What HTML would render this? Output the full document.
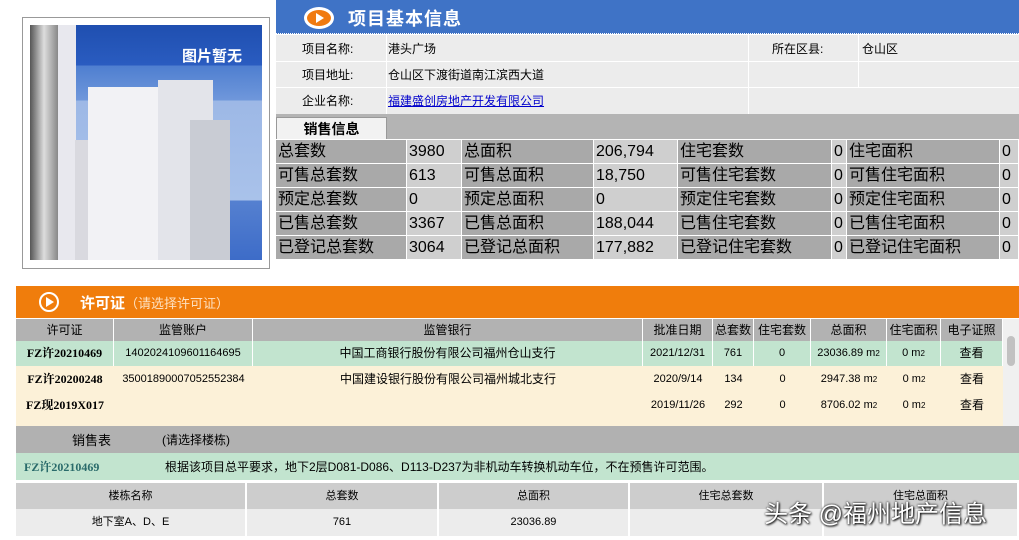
<!DOCTYPE html>
<html><head><meta charset="utf-8"><style>
*{margin:0;padding:0;box-sizing:border-box}
body{width:1019px;height:540px;background:#fff;position:relative;overflow:hidden;font-family:"Liberation Sans","Noto Sans CJK SC",sans-serif;font-size:12px;color:#000}
.a{position:absolute}
.c{position:absolute;display:flex;align-items:center;white-space:nowrap}
.cc{justify-content:center}
sup{font-size:8px;line-height:0;vertical-align:6px}
</style></head><body>
<div class="a" style="left:22px;top:17px;width:248px;height:252px;border:1px solid #999"></div>
<div class="a" style="left:30px;top:25px;width:232px;height:235px;background:linear-gradient(180deg,#1f4fb0 0,#2a5cc0 40px,#4f7fd0 41px,#6f97db 75px,#9db8e6 76px,#a9c2ea 175px,#5580d0 176px,#3d6cc8 235px);overflow:hidden">
 <div class="a" style="left:0;top:0;width:28px;height:235px;background:linear-gradient(90deg,#555,#ddd,#888)"></div>
 <div class="a" style="left:28px;top:0;width:18px;height:235px;background:#e8e8ee"></div>
 <div class="a" style="left:45px;top:115px;width:25px;height:120px;background:#d9d9df"></div>
 <div class="a" style="left:58px;top:62px;width:70px;height:173px;background:#f2f2f5"></div>
 <div class="a" style="left:128px;top:55px;width:55px;height:180px;background:#e3e4ea"></div>
 <div class="a" style="left:160px;top:95px;width:40px;height:140px;background:#c9ccd4"></div>
 <div class="a" style="left:152px;top:20px;color:#fff;font-size:15px;font-weight:bold">图片暂无</div>
</div>
<div class="a" style="left:276px;top:0;width:743px;height:34px;background:#3f73c6;border-bottom:1px dotted #fff"></div>
<div class="a" style="left:304px;top:7px;width:30px;height:22px;border-radius:50%;background:#f07a10;border:3px solid #fff"></div>
<div class="a" style="left:316px;top:13px;width:0;height:0;border-left:8px solid #fff;border-top:5px solid transparent;border-bottom:5px solid transparent"></div>
<div class="c" style="left:348px;top:4px;height:28px;color:#fff;font-size:18px;font-weight:bold;letter-spacing:1px">项目基本信息</div>
<div class="a" style="left:276px;top:35px;width:743px;height:79px;background:#ececec"></div>
<div class="a" style="left:276px;top:61px;width:743px;height:1px;background:#fff"></div>
<div class="a" style="left:276px;top:87px;width:743px;height:1px;background:#fff"></div>
<div class="a" style="left:386px;top:35px;width:1px;height:79px;background:#fff"></div>
<div class="a" style="left:748px;top:35px;width:1px;height:79px;background:#fff"></div>
<div class="a" style="left:858px;top:35px;width:1px;height:52px;background:#fff"></div>
<div class="c" style="left:302px;top:36px;height:25px">项目名称:</div>
<div class="c" style="left:388px;top:36px;height:25px">港头广场</div>
<div class="c" style="left:772px;top:36px;height:25px">所在区县:</div>
<div class="c" style="left:862px;top:36px;height:25px">仓山区</div>
<div class="c" style="left:302px;top:62px;height:25px">项目地址:</div>
<div class="c" style="left:388px;top:62px;height:25px">仓山区下渡街道南江滨西大道</div>
<div class="c" style="left:302px;top:88px;height:25px">企业名称:</div>
<div class="c" style="left:388px;top:88px;height:25px;color:#00c;text-decoration:underline">福建盛创房地产开发有限公司</div>
<div class="a" style="left:276px;top:114px;width:743px;height:25px;background:#b4b4b4"></div>
<div class="c cc" style="left:276px;top:117px;width:111px;height:22px;background:#f2f2f2;border:1px solid #999;border-bottom:none;font-weight:bold;font-size:14px">销售信息</div>
<div class="a" style="left:276px;top:139px;width:743px;height:121px;background:#fff"></div>
<div class="a" style="left:16px;top:286px;width:1003px;height:32px;background:#f07d0c"></div>
<div class="a" style="left:39px;top:292px;width:20px;height:20px;border-radius:50%;border:2px solid #fff"></div>
<div class="a" style="left:46px;top:297px;width:0;height:0;border-left:8px solid #fff;border-top:5px solid transparent;border-bottom:5px solid transparent"></div>
<div class="c" style="left:80px;top:289px;height:26px;color:#fff;font-size:15px;font-weight:bold">许可证<span style="font-weight:normal;font-size:13px;color:#fde0c0">（请选择许可证）</span></div>
<div class="a" style="left:16px;top:319px;width:987px;height:22px;background:#b2b2b2"></div>
<div class="a" style="left:16px;top:341px;width:987px;height:25px;background:#c2e4cf"></div>
<div class="a" style="left:16px;top:366px;width:987px;height:60px;background:#fcf1d8"></div>
<div class="a" style="left:1003px;top:319px;width:16px;height:107px;background:#f0f0f0"></div>
<div class="a" style="left:1007px;top:336px;width:8px;height:30px;border-radius:4px;background:#c1c1c1"></div>
<div class="a" style="left:16px;top:426px;width:1003px;height:27px;background:#b1b1b1"></div>
<div class="c" style="left:72px;top:426px;height:27px;font-size:13px">销售表</div>
<div class="c" style="left:162px;top:426px;height:27px">(请选择楼栋)</div>
<div class="a" style="left:16px;top:453px;width:1003px;height:27px;background:#c2e4cf"></div>
<div class="c" style="left:24px;top:453px;height:27px;color:#2a6b6b;font-weight:bold;font-family:'Liberation Serif','Noto Serif CJK SC',serif">FZ许20210469</div>
<div class="c" style="left:165px;top:453px;height:27px">根据该项目总平要求，地下2层D081-D086、D113-D237为非机动车转换机动车位，不在预售许可范围。</div>
<div class="a" style="left:16px;top:483px;width:1003px;height:26px;background:#cdcdcd"></div>
<div class="a" style="left:16px;top:509px;width:1003px;height:27px;background:#ececec"></div>
<script>
function C(p,l,t,w,h,txt,st){var d=document.createElement('div');d.className='c'+(st&&st.indexOf('L')==0?'':' cc');d.style.cssText='left:'+l+'px;top:'+t+'px;width:'+w+'px;height:'+h+'px;line-height:'+h+'px;'+(st?st.replace(/^L;?/,''):'');d.innerHTML=txt;p.appendChild(d);}
var b=document.body;
var cols=[276,407,462,594,678,832,847,1000,1019];
var rows=[["总套数","3980","总面积","206,794","住宅套数","0","住宅面积","0"],["可售总套数","613","可售总面积","18,750","可售住宅套数","0","可售住宅面积","0"],["预定总套数","0","预定总面积","0","预定住宅套数","0","预定住宅面积","0"],["已售总套数","3367","已售总面积","188,044","已售住宅套数","0","已售住宅面积","0"],["已登记总套数","3064","已登记总面积","177,882","已登记住宅套数","0","已登记住宅面积","0"]];
rows.forEach(function(r,i){r.forEach(function(t,j){var l=cols[j],w=cols[j+1]-l-1;C(b,l,140+i*24,w,23,'<span style="line-height:1;display:block">'+t+'</span>','L;font-size:16px;padding-left:2px;justify-content:flex-start;background:'+(j%2?'#cfcfcf':'#a9a9a9'));});});
var pc=[16,114,253,643,713,754,811,887,941,1003];
var ph=["许可证","监管账户","监管银行","批准日期","总套数","住宅套数","总面积","住宅面积","电子证照"];
ph.forEach(function(t,j){C(b,pc[j],319,pc[j+1]-pc[j],22,t,'font-size:12px;border-right:1px solid #fff');});
var pr=[["FZ许20210469","1402024109601164695","中国工商银行股份有限公司福州仓山支行","2021/12/31","761","0","23036.89 m<sup>2</sup>","0 m<sup>2</sup>","查看"],["FZ许20200248","35001890007052552384","中国建设银行股份有限公司福州城北支行","2020/9/14","134","0","2947.38 m<sup>2</sup>","0 m<sup>2</sup>","查看"],["FZ现2019X017","","","2019/11/26","292","0","8706.02 m<sup>2</sup>","0 m<sup>2</sup>","查看"]];
pr.forEach(function(r,i){r.forEach(function(t,j){var s='font-size:11px;';if(j==0)s+='font-weight:bold;font-family:"Liberation Serif","Noto Serif CJK SC",serif;font-size:12px;';if(j==2||j==8)s+='font-size:12px;';if(i==0)s+='border-right:1px solid #fff;';C(b,pc[j],341+i*26,pc[j+1]-pc[j],25,t,s);});});
var bc=[16,247,439,630,824,1019];
["楼栋名称","总套数","总面积","住宅总套数","住宅总面积"].forEach(function(t,j){C(b,bc[j],483,bc[j+1]-bc[j],26,t,'font-size:11px;border-right:2px solid #fff');});
["地下室A、D、E","761","23036.89","",""].forEach(function(t,j){C(b,bc[j],509,bc[j+1]-bc[j],27,t,'font-size:11px;border-right:2px solid #fff');});
</script>
<div class="c" style="left:764px;top:496px;height:30px;color:#fff;font-size:24px;text-shadow:0 0 2px #000,1px 1px 2px #000">头条 @福州地产信息</div>
</body></html>
